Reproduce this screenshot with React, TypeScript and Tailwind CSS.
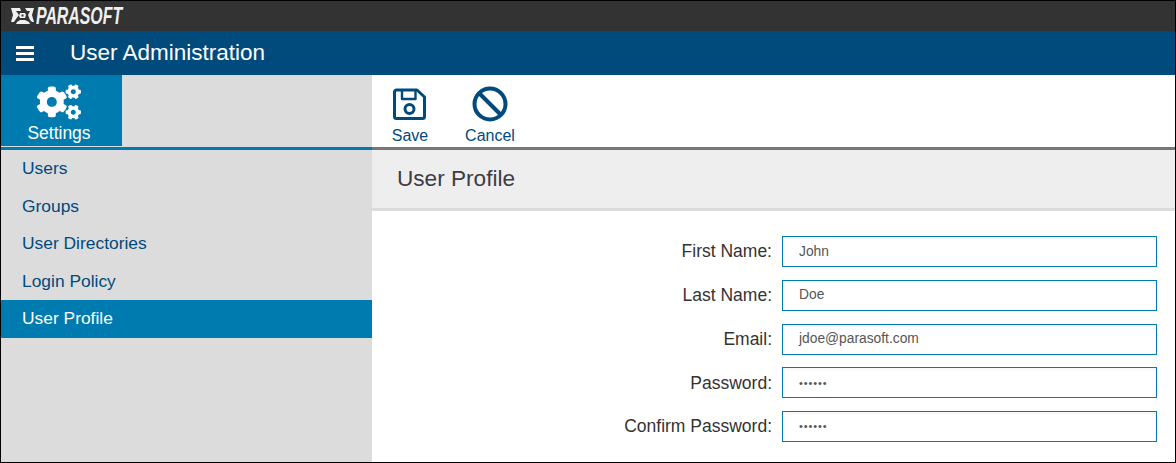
import React from 'react'
import { FaCogs } from 'react-icons/fa'

const navItems = ['Users', 'Groups', 'User Directories', 'Login Policy', 'User Profile']

const fields = [
  { label: 'First Name:', value: 'John' },
  { label: 'Last Name:', value: 'Doe' },
  { label: 'Email:', value: 'jdoe@parasoft.com' },
  { label: 'Password:', value: '••••••', secret: true },
  { label: 'Confirm Password:', value: '••••••', secret: true },
]

const Logo = () => (
  <div className="flex items-center pl-[10px]">
    <svg width="23" height="18" viewBox="0 0 23 18" fill="#f0f0f0">
      <path d="M0 1h9l1 3H5l3 4-3 4-2 3H0l2-7z" />
      <path d="M23 1h-9l2 3h3l-2 4 2 5 2 2h2l-2-7z" />
      <path d="M6 15l3-2h5l4 2 1 2H5z" />
      <path d="M9 6h5l1 2-1 3H9l-1-2zM10.500 7.500v2h2v-2z" fillRule="evenodd" />
    </svg>
    <span className="ml-[2px] origin-left scale-x-[0.69] font-['Liberation_Sans'] text-[23px] leading-none font-bold text-[#f0f0f0] italic">
      PARASOFT
    </span>
  </div>
)

const SaveIcon = () => (
  <svg width="34" height="34" viewBox="0 0 34 34" fill="none" stroke="#004a7c" strokeWidth="3" strokeLinejoin="round">
    <path d="M3.500 3h20.500l7.500 7v19.500a2 2 0 0 1-2 2h-26a2 2 0 0 1-2-2v-24.500a2 2 0 0 1 2-2z" />
    <path d="M9 3v9h13.500v-9" strokeWidth="2.400" />
    <circle cx="16.500" cy="22" r="4.500" />
  </svg>
)

const CancelIcon = () => (
  <svg width="36" height="36" viewBox="0 0 36 36" fill="none" stroke="#004a7c" strokeWidth="4">
    <circle cx="18" cy="18" r="15.500" />
    <path d="M7 7l22 22" />
  </svg>
)

export default function App() {
  return (
    <div className="flex h-[463px] w-[1176px] flex-col overflow-hidden border border-black bg-white font-['Liberation_Sans',Arial,sans-serif]">
      <div className="flex h-[30px] items-center bg-[#333333]">
        <Logo />
      </div>
      <div className="flex h-[44px] items-center bg-[#004a7c] text-white">
        <div className="ml-[15px] flex w-[18px] flex-col gap-[3px]">
          <span className="h-[3px] bg-white" />
          <span className="h-[3px] bg-white" />
          <span className="h-[3px] bg-white" />
        </div>
        <h1 className="ml-[36px] pt-[1px] text-[22.500px] leading-none">User Administration</h1>
      </div>

      <div className="flex flex-1">
        <aside className="flex w-[371px] flex-col bg-[#dcdcdc]">
          <div className="h-[75px] border-b-[3px] border-[#007bb0]">
            <div className="flex h-[71px] w-[121px] flex-col items-center bg-[#007bb0] pr-[5px] text-white">
              <FaCogs className="mt-[9px] h-[36px] w-[44px]" />
              <span className="mt-[3px] text-[17.500px] leading-5">Settings</span>
            </div>
          </div>
          {navItems.map((item) => (
            <div
              key={item}
              className={
                item === 'User Profile'
                  ? 'flex h-[37.500px] items-center bg-[#007bb0] pb-[1px] pl-[21px] text-[17.400px] text-white'
                  : 'flex h-[37.500px] items-center pb-[1px] pl-[21px] text-[17.400px] text-[#004a7c]'
              }
            >
              {item}
            </div>
          ))}
        </aside>

        <main className="flex flex-1 flex-col">
          <div className="flex h-[72px] text-[#004a7c]">
            <div className="ml-[18px] flex w-[40px] flex-col items-center pt-[12px]">
              <SaveIcon />
              <span className="mt-[5px] text-[16px] leading-5">Save</span>
            </div>
            <div className="ml-[34px] flex w-[52px] flex-col items-center pt-[11px]">
              <CancelIcon />
              <span className="mt-[4px] text-[16px] leading-5">Cancel</span>
            </div>
          </div>
          <div className="flex h-[64px] items-center border-t-[3px] border-b-[3px] border-t-[#777777] border-b-[#dcdcdc] bg-[#eeeeee] pb-[1px] pl-[25px] text-[22.600px] text-[#3c3c46]">
            User Profile
          </div>
          <div className="flex flex-col gap-[12.750px] pt-[25px] pr-[18px]">
            {fields.map((f) => (
              <div key={f.label} className="flex items-center justify-end gap-[10px]">
                <label className="text-[17.500px] text-[#333333]">{f.label}</label>
                <div
                  className={
                    f.secret
                      ? 'flex h-[31px] w-[375px] items-center border border-[#007bb0] pl-[16px] text-[11px] tracking-[0.9px] text-[#555555] shadow-[inset_0_2px_3px_rgba(0,0,0,0.04)]'
                      : 'flex h-[31px] w-[375px] items-center border border-[#007bb0] pt-[1px] pl-[16px] text-[13.800px] text-[#555555] shadow-[inset_0_2px_3px_rgba(0,0,0,0.04)]'
                  }
                >
                  {f.value}
                </div>
              </div>
            ))}
          </div>
        </main>
      </div>
    </div>
  )
}
